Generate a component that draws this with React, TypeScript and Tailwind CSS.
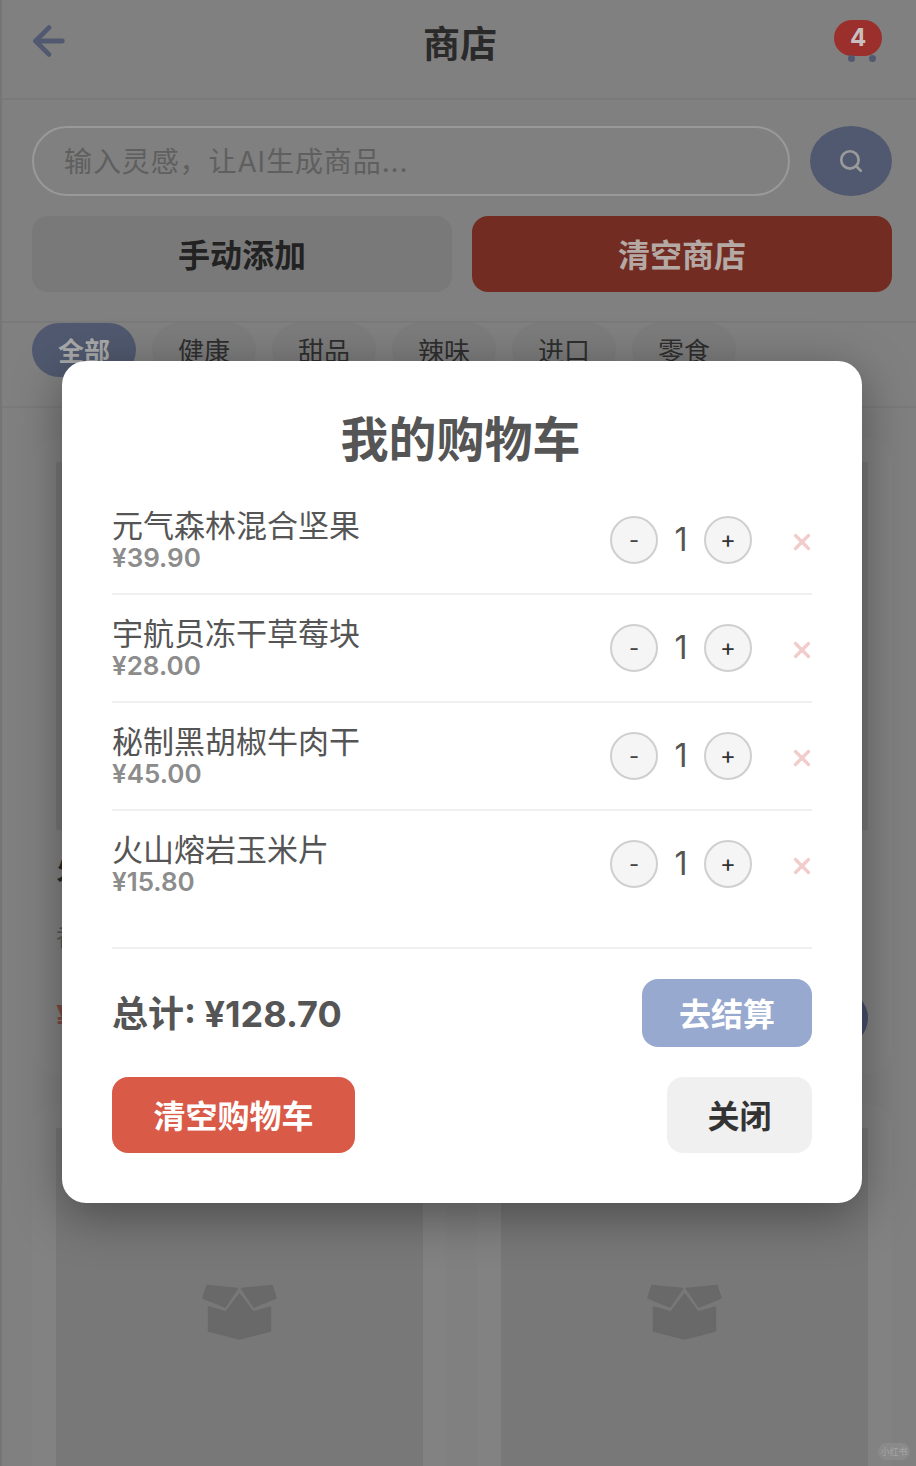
import React from 'react';
import { ArrowLeft, Search, X } from 'lucide-react';

const categories = ['全部', '健康', '甜品', '辣味', '进口', '零食'];

const cartItems = [
  { name: '元气森林混合坚果', price: '¥39.90' },
  { name: '宇航员冻干草莓块', price: '¥28.00' },
  { name: '秘制黑胡椒牛肉干', price: '¥45.00' },
  { name: '火山熔岩玉米片', price: '¥15.80' },
];

const products = [
  { name: '火山熔岩玉米片', desc: '香辣酥脆的玉米片', price: '¥15.80' },
  { name: '秘制黑胡椒牛肉干', desc: '浓郁黑胡椒风味', price: '¥45.00' },
  { name: '宇航员冻干草莓块', desc: '太空风味的草莓', price: '¥28.00' },
  { name: '元气森林混合坚果', desc: '每日营养坚果', price: '¥39.90' },
];

const BoxIcon = () => (
  <svg width="76" height="56" viewBox="0 0 76 56" fill="#696969" stroke="#696969" strokeWidth="1.5" strokeLinejoin="round">
    <path d="M5 1.5 L35.5 4.5 L23 23 L1 14 Z" />
    <path d="M70 1.5 L39.5 4.5 L52 23 L74 14 Z" />
    <path d="M6.5 23 L24 28 L37.5 10 L51 28 L68.5 23 V47 L37.5 55 L6.5 47 Z" />
  </svg>
);

const ProductCard = ({ name, desc, price }: { name: string; desc: string; price: string }) => (
  <div className="h-[636px] rounded-[24px] bg-[#828282] px-[24px] pt-[24px]">
    <div className="flex h-[368px] items-center justify-center bg-[#787878]">
      <BoxIcon />
    </div>
    <div className="mt-[16px] text-[30px] font-bold leading-[44px] text-[#2a2a2a]">{name}</div>
    <div className="mt-[31px] text-[24px] leading-[34px] text-[#555]">{desc}</div>
    <div className="mt-[35px] flex items-center justify-between">
      <span className="text-[32px] font-bold text-[#7d4a44]">{price}</span>
      <div className="h-[56px] w-[56px] rounded-full bg-[#46506a]" />
    </div>
  </div>
);

const CartRow = ({ name, price, last }: { name: string; price: string; last: boolean }) => (
  <div className={`flex h-[108px] items-center justify-between border-b-2 ${last ? 'border-transparent' : 'border-[#f0f0f0]'}`}>
    <div>
      <div className="text-[31px] leading-[36px] text-[#555]">{name}</div>
      <div className="text-[26px] font-semibold leading-[28px] text-[#8c8c8c]">{price}</div>
    </div>
    <div className="flex items-center">
      <button className="flex h-[48px] w-[48px] items-center justify-center rounded-full border-2 border-[#cfcfcf] bg-[#f5f5f5] text-[22px] text-[#444]">-</button>
      <span className="w-[46px] text-center text-[32px] text-[#555]">1</span>
      <button className="flex h-[48px] w-[48px] items-center justify-center rounded-full border-2 border-[#cfcfcf] bg-[#f5f5f5] text-[24px] text-[#333]">+</button>
      <X className="ml-[37px] -mr-[3px] mt-[3px] h-[26px] w-[26px] text-[#f2cccb]" strokeWidth={3} />
    </div>
  </div>
);

export default function App() {
  return (
    <div className="relative h-[1466px] w-[916px] overflow-hidden border-l-2 border-[#757575] bg-[#808080] font-[Inter,'Noto_Sans_CJK_SC',sans-serif]">
      {/* shop page, already dimmed by the modal */}
      <header className="-ml-[2px] flex h-[100px] items-start justify-between border-b-2 border-[#7a7a7a] pl-[26px] pr-[34px] pt-[18px]">
        <ArrowLeft className="h-[46px] w-[46px] text-[#50596f]" strokeWidth={2.5} />
        <h1 className="ml-[14px] pt-[3px] text-[37px] font-bold leading-[48px] text-[#2a2a2a]">商店</h1>
        <div className="relative mt-[2px] h-[44px] w-[48px]">
          <div className="flex h-[36px] w-[48px] items-center justify-center rounded-[18px] bg-[#9a2f2c] text-[24px] font-bold text-[#c8c0c0]">4</div>
          <span className="absolute left-[14px] top-[35px] h-[7px] w-[7px] rounded-full bg-[#50596f]" />
          <span className="absolute left-[35px] top-[35px] h-[7px] w-[7px] rounded-full bg-[#50596f]" />
        </div>
      </header>

      <section className="-ml-[2px] h-[223px] border-b-2 border-[#7a7a7a] pl-[32px] pr-[24px] pt-[26px]">
        <div className="flex gap-[20px]">
          <div className="flex h-[70px] flex-1 items-center rounded-full border-2 border-[#999] pl-[30px] pt-[2px] text-[28px] tracking-[0.9px] text-[#5f5f5f]">
            输入灵感，让AI生成商品...
          </div>
          <button className="flex h-[70px] w-[82px] items-center justify-center rounded-[50%] bg-[#50596f]">
            <Search className="h-[26px] w-[26px] text-[#9a9a9a]" strokeWidth={2.5} />
          </button>
        </div>
        <div className="mt-[20px] flex gap-[20px]">
          <button className="h-[76px] flex-1 rounded-[16px] bg-[#797979] pt-[3px] text-[32px] font-bold text-[#222]">手动添加</button>
          <button className="h-[76px] flex-1 rounded-[16px] bg-[#722c22] pt-[3px] text-[32px] font-bold text-[#b5a9a5]">清空商店</button>
        </div>
      </section>

      <nav className="-ml-[2px] flex h-[85px] gap-[16px] border-b-2 border-[#7a7a7a] pl-[32px]">
        {categories.map((c, i) => (
          <div
            key={c}
            className={`flex h-[54px] w-[104px] items-center justify-center rounded-full pt-[3px] text-[26px] ${
              i === 0 ? 'bg-[#50596f] font-bold text-[#a9a9a9]' : 'bg-[#7c7c7c] text-[#2e2e2e]'
            }`}
          >
            {c}
          </div>
        ))}
      </nav>

      <main className="-ml-[2px] grid grid-cols-2 gap-[30px] pl-[32px] pr-[24px] pt-[30px]">
        {products.map((p) => (
          <ProductCard key={p.name} {...p} />
        ))}
      </main>

      <div className="absolute bottom-[6px] right-[6px] flex h-[17px] w-[32px] items-center justify-center rounded-full bg-[#8a8a8a] text-[9px] text-[#a5a5a5]">小红书</div>

      {/* cart modal */}
      <div className="absolute inset-0 -left-[2px] flex items-start justify-center pl-[8px] pt-[361px]">
        <div className="h-[842px] w-[800px] rounded-[24px] bg-white px-[50px] pt-[50px] shadow-[0_12px_50px_rgba(0,0,0,0.38)]">
          <h2 className="pr-[3px] text-center text-[48px] font-bold leading-[58px] text-[#555]">我的购物车</h2>
          <div className="mt-[18px]">
            {cartItems.map((item, i) => (
              <CartRow key={item.name} name={item.name} price={item.price} last={i === cartItems.length - 1} />
            ))}
          </div>
          <div className="mt-[28px] flex items-center justify-between border-t-2 border-[#f0f0f0] pt-[30px]">
            <span className="pt-[1px] text-[36px] font-bold text-[#555]">总计: ¥128.70</span>
            <button className="h-[68px] w-[170px] rounded-[16px] bg-[#98a9cf] pt-[3px] text-[32px] font-bold text-white">去结算</button>
          </div>
          <div className="mt-[30px] flex justify-between">
            <button className="h-[76px] w-[243px] rounded-[16px] bg-[#d95a47] pt-[3px] text-[32px] font-bold text-white">清空购物车</button>
            <button className="h-[76px] w-[145px] rounded-[16px] bg-[#f0f0f0] pt-[3px] text-[32px] font-semibold text-[#333]">关闭</button>
          </div>
        </div>
      </div>
    </div>
  );
}
